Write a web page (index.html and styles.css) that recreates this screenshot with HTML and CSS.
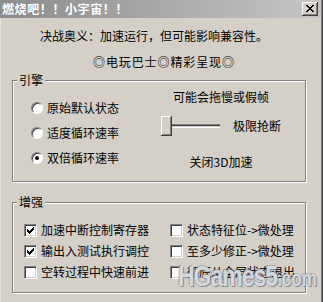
FILE: index.html
```html
<!DOCTYPE html>
<html lang="zh-CN">
<head>
<meta charset="utf-8">
<title>燃烧吧！！小宇宙！！</title>
<link rel="stylesheet" href="styles.css">
</head>
<body>
<div class="window">
  <div class="titlebar">
    <span class="title">燃烧吧！！小宇宙！！</span>
    <span class="close"><svg width="8" height="7" viewBox="0 0 8 7" shape-rendering="crispEdges"><path fill="#000" d="M0 0h2v1h-2z M6 0h2v1h-2z M1 1h2v1h-2z M5 1h2v1h-2z M2 2h4v1h-4z M3 3h2v1h-2z M2 4h4v1h-4z M1 5h2v1h-2z M5 5h2v1h-2z M0 6h2v1h-2z M6 6h2v1h-2z"/></svg></span>
  </div>
  <div class="client">
    <p class="line1">决战奥义：加速运行，但可能影响兼容性。</p>
    <p class="line2">◎电玩巴士◎精彩呈现◎</p>
    <section class="group">
      <h2 class="legend">引擎</h2>
      <div class="engine-body">
        <div class="radios">
          <label class="opt"><span class="radio"></span>原始默认状态</label>
          <label class="opt"><span class="radio"></span>适度循环速率</label>
          <label class="opt"><span class="radio checked"></span>双倍循环速率</label>
        </div>
        <div class="speed">
          <div class="speed-hint">可能会拖慢或假帧</div>
          <div class="slider-row">
            <div class="slider"><span class="thumb"></span><span class="track"></span></div>
            <span>极限抢断</span>
          </div>
          <div class="speed-note">关闭3D加速</div>
        </div>
      </div>
    </section>
    <section class="group group-boost">
      <h2 class="legend">增强</h2>
      <div class="boost-body">
        <label class="opt"><span class="cb"><svg width="7" height="7" viewBox="0 0 7 7" shape-rendering="crispEdges"><path fill="#000" d="M6 0h1v1h-1z M5 1h2v1h-2z M0 2h1v1h-1z M4 2h3v1h-3z M0 3h2v1h-2z M3 3h3v1h-3z M0 4h5v1h-5z M1 5h3v1h-3z M2 6h1v1h-1z"/></svg></span>加速中断控制寄存器</label>
        <label class="opt"><span class="cb"></span>状态特征位-&gt;微处理</label>
        <label class="opt"><span class="cb"><svg width="7" height="7" viewBox="0 0 7 7" shape-rendering="crispEdges"><path fill="#000" d="M6 0h1v1h-1z M5 1h2v1h-2z M0 2h1v1h-1z M4 2h3v1h-3z M0 3h2v1h-2z M3 3h3v1h-3z M0 4h5v1h-5z M1 5h3v1h-3z M2 6h1v1h-1z"/></svg></span>输出入测试执行调控</label>
        <label class="opt"><span class="cb"></span>至多少修正-&gt;微处理</label>
        <label class="opt"><span class="cb"></span>空转过程中快速前进</label>
        <label class="opt"><span class="cb"></span>彻底从全屏状态退出</label>
      </div>
    </section>
  </div>
  <div class="watermark">HGames5<span class="wm-small">.com</span></div>
</div>
</body>
</html>
```

FILE: styles.css
```css
* { box-sizing: border-box; }
html, body { margin: 0; padding: 0; }
body {
  width: 323px;
  height: 302px;
  overflow: hidden;
  background: #d4d0c8;
  font-family: "Noto Sans CJK SC", "Noto Sans", sans-serif;
  font-size: 12px;
  line-height: 14px;
  color: #000;
}
.window {
  position: relative;
  width: 323px;
  height: 302px;
  background: #d4d0c8;
  box-shadow: inset -1px 0 #404040, inset -2px 0 #808080, inset 1px 0 #e6e3dc;
}
.titlebar {
  height: 18px;
  margin-right: 2px;
  background: linear-gradient(to right, #8c8c8c, #c6c6c6);
  display: flex;
  align-items: center;
  justify-content: space-between;
  padding: 0 3px 0 2px;
}
.title {
  color: #fff;
  font-weight: bold;
  font-size: 12px;
  letter-spacing: 0.6px;
}
.close {
  width: 16px;
  height: 14px;
  background: #d4d0c8;
  box-shadow: inset -1px -1px #404040, inset 1px 1px #fff, inset -2px -2px #808080;
  display: flex;
  align-items: center;
  justify-content: center;
  padding-bottom: 1px;
}
.close svg { display: block; }
.client { padding: 11px 0 0 12px; }
.line1 { margin: 0 0 12px 28px; }
.line2 { margin: 0 0 11px 81px; letter-spacing: 0.9px; }
.group {
  width: 294px;
  border: 1px solid #808080;
  box-shadow: inset 1px 1px #fff, 1px 1px #fff;
}
.group-boost { margin-top: 20px; }
.legend {
  margin: -8px 0 0 4px;
  padding: 0 2px;
  width: max-content;
  background: #d4d0c8;
  font-size: 12px;
  font-weight: normal;
  line-height: 14px;
}
.engine-body {
  display: grid;
  grid-template-columns: 120px 140px;
  padding: 3px 0 12px 18px;
}
.radios {
  display: flex;
  flex-direction: column;
  gap: 11px;
  margin-top: 11px;
}
.opt {
  display: flex;
  align-items: center;
  gap: 4px;
  height: 14px;
  white-space: nowrap;
}
.radio {
  position: relative;
  flex: none;
  width: 12px;
  height: 12px;
  border-radius: 50%;
  background: #fff;
  border: 1px solid;
  border-color: #808080 #fff #fff #808080;
  box-shadow: inset 1px 1px #404040;
  display: flex;
  align-items: center;
  justify-content: center;
}
.radio.checked::after {
  content: "";
  width: 4px;
  height: 4px;
  border-radius: 50%;
  background: #000;
}
.speed {
  display: flex;
  flex-direction: column;
  align-items: center;
}
.slider-row {
  display: flex;
  align-items: center;
  gap: 13px;
  margin-top: 12px;
  height: 20px;
}
.slider {
  display: flex;
  align-items: center;
  width: 59px;
  height: 20px;
}
.thumb {
  flex: none;
  width: 11px;
  height: 20px;
  background: #d4d0c8;
  box-shadow: inset -1px -1px #404040, inset 1px 1px #fff, inset -2px -2px #808080;
}
.track {
  flex: 1;
  height: 4px;
  border-top: 1px solid #808080;
  border-bottom: 1px solid #fff;
  background: #d4d0c8;
  box-shadow: inset 0 1px #404040;
}
.speed-note { margin-top: 19px; }
.boost-body {
  display: grid;
  grid-template-columns: 146px 130px;
  row-gap: 7px;
  padding: 14px 0 13px 11px;
}
.cb {
  flex: none;
  width: 13px;
  height: 13px;
  background: #fff;
  border: 1px solid;
  border-color: #808080 #fff #fff #808080;
  box-shadow: inset 1px 1px #404040, inset -1px -1px #d4d0c8;
  display: flex;
  align-items: center;
  justify-content: center;
}
.cb svg { display: block; }
.watermark {
  position: absolute;
  left: 178px;
  top: 262px;
  font-family: "Liberation Sans", Arial, sans-serif;
  font-weight: bold;
  font-size: 23px;
  line-height: 23px;
  letter-spacing: -1px;
  color: rgba(255, 255, 255, 0.72);
  text-shadow: 0 0 1px #6f7486, 1px 1px 0 rgba(80, 86, 104, 0.55), -1px -1px 0 rgba(120, 126, 140, 0.4);
  transform: scaleY(1.25);
  transform-origin: 0 0;
  white-space: nowrap;
  pointer-events: none;
}
.wm-small { font-size: 17px; letter-spacing: 0; }
```
